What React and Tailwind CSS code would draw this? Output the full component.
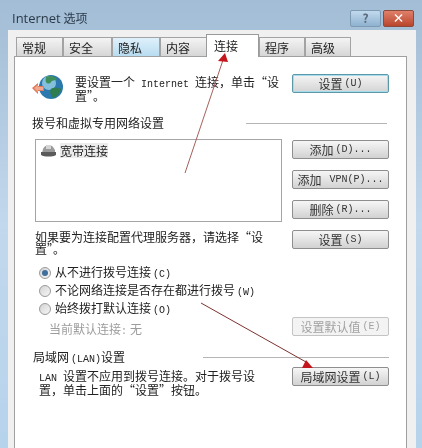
const CJK = 'font-["Noto_Sans_CJK_SC","Liberation_Sans",sans-serif]'
const MONO = 'font-["Liberation_Mono","Noto_Sans_CJK_SC",monospace] text-[10px] leading-none'

const tabs = [
  { label: '常规', w: 'w-[47px]' },
  { label: '安全', w: 'w-[49px]' },
  { label: '隐私', w: 'w-[48px]', hot: true },
  { label: '内容', w: 'w-[47px]' },
  { label: '连接', w: 'w-[53px]', active: true },
  { label: '程序', w: 'w-[46px]' },
  { label: '高级', w: 'w-[46px]' },
]

function Tab({ label, w, active, hot }) {
  if (active) {
    return (
      <div className={`${w} relative z-10 -ml-px -mb-px h-[23px] border border-b-0 border-[#9a9a9a] bg-white pl-[7px] pt-[3px] text-[12px] leading-[16px] text-[#222]`}>
        {label}
      </div>
    )
  }
  return (
    <div
      className={`${w} h-[19px] border border-b-0 border-[#a3a3a3] pl-[5px] text-[12px] leading-[19px] text-[#222] ${
        hot ? 'bg-gradient-to-b from-[#dff1fb] to-[#b8dcf0]' : 'bg-gradient-to-b from-[#f4f4f4] to-[#d6d6d6]'
      }`}
    >
      {label}
    </div>
  )
}

function Btn({ children, disabled, focus, className = '' }) {
  return (
    <div
      className={`flex h-[19px] w-[97px] shrink-0 items-center justify-center rounded-[2px] border text-[12px] leading-none ${
        disabled
          ? 'border-[#c4c4c4] bg-[#f3f3f3] text-[#a2a2a2]'
          : focus
            ? 'border-[#5b98a8] bg-gradient-to-b from-[#f5f5f5] to-[#d4d4d4] text-[#333] ring-1 ring-inset ring-[#a8dcec]'
            : 'border-[#8e8e8e] bg-gradient-to-b from-[#f6f6f6] to-[#d2d2d2] text-[#333]'
      } ${className}`}
    >
      {children}
    </div>
  )
}

function Key({ children }) {
  return <span className={`${MONO} ml-[2px]`}>{children}</span>
}

function Radio({ checked, children }) {
  return (
    <div className="flex h-[14px] items-center">
      <span className="flex h-[12px] w-[12px] shrink-0 items-center justify-center rounded-full border border-[#9a9a9a] bg-gradient-to-br from-[#d4d4d4] to-[#f6f6f6]">
        {checked && <span className="h-[6px] w-[6px] rounded-full bg-[#3f6f9c]" />}
      </span>
      <span className="ml-[4px] text-[12px] leading-none text-[#222]">{children}</span>
    </div>
  )
}

function GlobeIcon() {
  return (
    <svg width="32" height="28" viewBox="0 0 32 28" className="shrink-0">
      <circle cx="19" cy="13" r="12" fill="#2a78ad" />
      <circle cx="17" cy="9" r="7" fill="#9bd2ea" opacity="0.8" />
      <path d="M14 3c4-2 9-1 11 2-2 2-5 1-6 3s-4 2-5 0 0-3 0-5z" fill="#3f8f5a" />
      <path d="M19 15c3-2 7-1 10 0-1 4-4 8-8 9-2-2-4-7-2-9z" fill="#2f7d4f" />
      <path d="M0 14l6-5v3h6v5H6v3z" fill="#dd7a5c" />
      <path d="M2 14l4-3v2h5v3H6v2z" fill="#f2a88e" />
    </svg>
  )
}

function DialIcon() {
  return (
    <svg width="17" height="13" viewBox="0 0 17 13" className="shrink-0">
      <path d="M3 5c1-4 8-5 10-2l2 3v3H2z" fill="#9a9a9a" />
      <path d="M1 8h15v3c-3 2-12 2-15 0z" fill="#5a5a5a" />
      <rect x="6" y="1" width="5" height="4" fill="#d4d4d4" />
    </svg>
  )
}

// 빨간 화살표 — 스크린샷 위에 그려진 주석
function Arrows() {
  return (
    <svg width="422" height="448" viewBox="0 0 422 448" className="pointer-events-none absolute left-0 top-0 z-20">
      <path d="M185 173L223 60" stroke="#a5605c" strokeWidth="1" fill="none" />
      <path d="M218 61L228 62L225 53z" fill="#c4161c" />
      <path d="M201 303L306 362" stroke="#7d3230" strokeWidth="1" fill="none" />
      <path d="M302 368L313 368L306 360z" fill="#c4161c" />
    </svg>
  )
}

export default function App() {
  return (
    <div className={`${CJK} relative h-[448px] w-[422px] overflow-hidden bg-gradient-to-b from-[#a3bdd6] via-[#c2d8ec] to-[#b6d3ec] blur-[0.4px]`}>
      <div className="flex h-[30px] items-center justify-between pl-[12px] pr-[8px] pt-[6px]">
        <span className="text-[12px] leading-none text-[#2b3a48]">
          <span className='font-["Open_Sans",sans-serif] text-[13px]'>Internet</span> 选项
        </span>
        <div className="flex gap-[2px]">
          <div className="flex h-[17px] w-[31px] items-center justify-center rounded-[2px] border border-[#7d9ab5] bg-gradient-to-b from-[#c2d9ec] to-[#8fb2d0] text-[12px] font-bold leading-none text-[#5a6b7c]">
            ?
          </div>
          <div className="flex h-[17px] w-[31px] items-center justify-center rounded-[2px] border border-[#8a4a3c] bg-gradient-to-b from-[#e0806a] to-[#b9452c] text-[12px] font-bold leading-none text-white">
            ×
          </div>
        </div>
      </div>

      <div className="ml-[8px] mr-[6px] h-[418px] bg-[#f0f0f0] pl-[6px] pr-[9px] pt-[4px]">
        <div className="flex h-[22px] items-end pl-[2px]">
          {tabs.map((t) => (
            <Tab key={t.label} {...t} />
          ))}
        </div>

        <div className="h-[400px] border border-[#a0a0a0] bg-white px-[17px] pt-[17px]">
          {/* 연결 설정 */}
          <div className="flex h-[28px] items-start">
            <GlobeIcon />
            <p className="ml-[11px] mt-[2px] whitespace-nowrap text-[12px] leading-[12px] text-[#222]">
              要设置一个<span className={MONO}> Internet </span>连接，单击“设
              <br />
              置”。
            </p>
            <Btn focus className="ml-auto">
              设置<Key>(U)</Key>
            </Btn>
          </div>

          <div className="mt-[13px] flex h-[16px] items-center">
            <span className="text-[12px] leading-[16px] text-[#222]">拨号和虚拟专用网络设置</span>
            <div className="ml-auto mr-[2px] h-px w-[141px] bg-[#b5b5b5]" />
          </div>

          {/* 목록 + 버튼 */}
          <div className="mt-[8px] flex items-start justify-between pl-[3px]">
            <div className="h-[83px] w-[247px] border border-[#a5a5a5] bg-white pl-[4px] pt-[3px]">
              <div className="flex items-center gap-[3px] text-[12px] leading-[15px] text-[#222]">
                <DialIcon />
                <span className="bg-[#ececec]">宽带连接</span>
              </div>
            </div>
            <div className="mt-px flex flex-col gap-[11px]">
              <Btn>添加<Key>(D)...</Key></Btn>
              <Btn>添加<Key>&nbsp;VPN(P)...</Key></Btn>
              <Btn>删除<Key>(R)...</Key></Btn>
            </div>
          </div>

          <div className="mt-[8px] flex h-[26px] items-start justify-between pl-[3px]">
            <p className="mt-px whitespace-nowrap text-[12px] leading-[12px] text-[#222]">
              如果要为连接配置代理服务器，请选择“设
              <br />
              置”。
            </p>
            <Btn>设置<Key>(S)</Key></Btn>
          </div>

          <div className="mt-[10px] flex flex-col gap-[4px] pl-[7px]">
            <Radio checked>从不进行拨号连接<Key>(C)</Key></Radio>
            <Radio>不论网络连接是否存在都进行拨号<Key>(W)</Key></Radio>
            <Radio>始终拨打默认连接<Key>(O)</Key></Radio>
          </div>

          <div className="mt-px flex h-[19px] items-start justify-between">
            <span className="pl-[17px] pt-[6px] text-[12px] leading-none text-[#9c9c9c]">
              当前默认连接<span className={`${MONO} mr-[3px]`}>:</span>无
            </span>
            <Btn disabled>设置默认值<Key>(E)</Key></Btn>
          </div>

          <div className="mt-[13px] flex h-[16px] items-center">
            <span className="pl-px text-[12px] leading-[16px] text-[#222]">
              局域网<Key>(LAN)</Key>设置
            </span>
            <div className="ml-auto h-px w-[186px] bg-[#b5b5b5]" />
          </div>

          <div className="mt-[2px] flex items-start justify-between">
            <p className="mt-[3px] whitespace-nowrap pl-[7px] text-[12px] leading-[12px] text-[#222]">
              <span className={MONO}>LAN </span>设置不应用到拨号连接。对于拨号设
              <br />
              置，单击上面的“设置”按钮。
            </p>
            <Btn>局域网设置<Key>(L)</Key></Btn>
          </div>
        </div>
      </div>

      <Arrows />
    </div>
  )
}
